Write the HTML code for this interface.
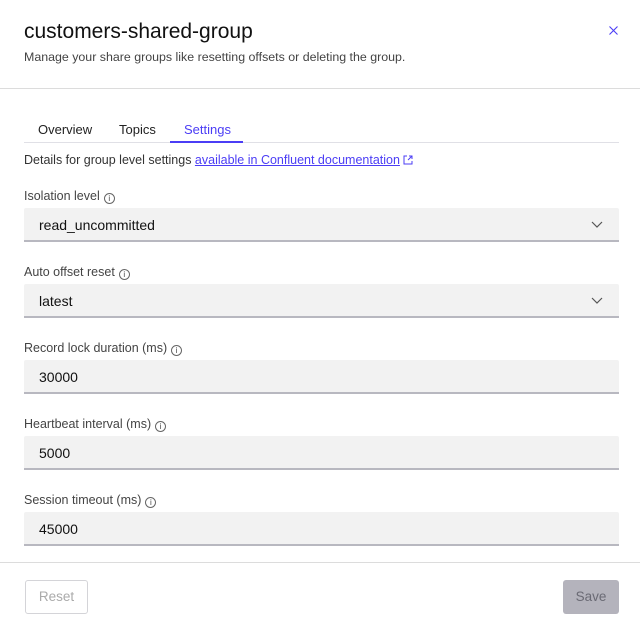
<!DOCTYPE html>
<html><head><style>
*{box-sizing:border-box;margin:0;padding:0}
body{width:640px;height:622px;background:#fff;font-family:"Liberation Sans",sans-serif;color:#1f1f1f;position:relative;overflow:hidden}
.a{position:absolute}
.title{left:24px;top:20px;font-size:21px;color:#111}
.sub{left:24px;top:50px;font-size:12.4px;color:#444}
.close{right:22px;top:26px}
.hr{left:0;width:640px;height:1px;background:#dcdcdc}
.tabline{left:24px;top:142px;width:595px;height:1px;background:#e0e0e6}
.tab{top:122px;font-size:13px;color:#222}
.ul{left:170px;top:141px;width:73px;height:2px;background:#4b3df5}
.det{left:24px;top:153px;font-size:12.5px;color:#333}
.det span{color:#4b3df5;text-decoration:underline}
.lab{left:24px;font-size:12.5px;color:#444}
.i{display:inline-block;width:11px;height:11px;border:1px solid #666;border-radius:50%;font-size:8px;text-align:center;line-height:9px;margin-left:4px;vertical-align:-1px}
.f{left:24px;width:595px;height:34px;background:#f2f2f2;border-bottom:2px solid #b8b8c0;border-radius:2px 2px 0 0;font-size:14px;padding:9px 0 0 15px;color:#111}
.chev{position:absolute;right:16px;top:13px}
.btn{top:580px;height:34px;border-radius:3px;font-size:13.5px;text-align:center;line-height:34px}
</style></head><body>
<div class="a title">customers-shared-group</div>
<div class="a sub">Manage your share groups like resetting offsets or deleting the group.</div>
<svg class="a close" width="9" height="9" viewBox="0 0 9 9"><path d="M0.5 0.5l8 8M8.5 0.5l-8 8" stroke="#4b3df5" stroke-width="1.1"/></svg>
<div class="a hr" style="top:88px"></div>
<div class="a tabline"></div>
<div class="a tab" style="left:38px">Overview</div>
<div class="a tab" style="left:119px">Topics</div>
<div class="a tab" style="left:184px;color:#4b3df5">Settings</div>
<div class="a ul"></div>
<div class="a det">Details for group level settings <span>available in Confluent documentation</span> <svg width="10" height="10" viewBox="0 0 10 10" style="vertical-align:-1px"><path d="M4 1H1v8h8V6M6 1h3v3M9 1 5 5" fill="none" stroke="#4b3df5" stroke-width="1"/></svg></div>

<div class="a lab" style="top:189px">Isolation level<span class="i">i</span></div>
<div class="a f" style="top:208px">read_uncommitted<svg class="chev" width="12" height="8" viewBox="0 0 12 8"><path d="M1 1l5 5 5-5" fill="none" stroke="#555" stroke-width="1.2"/></svg></div>
<div class="a lab" style="top:265px">Auto offset reset<span class="i">i</span></div>
<div class="a f" style="top:284px">latest<svg class="chev" width="12" height="8" viewBox="0 0 12 8"><path d="M1 1l5 5 5-5" fill="none" stroke="#555" stroke-width="1.2"/></svg></div>
<div class="a lab" style="top:341px">Record lock duration (ms)<span class="i">i</span></div>
<div class="a f" style="top:360px">30000</div>
<div class="a lab" style="top:417px">Heartbeat interval (ms)<span class="i">i</span></div>
<div class="a f" style="top:436px">5000</div>
<div class="a lab" style="top:493px">Session timeout (ms)<span class="i">i</span></div>
<div class="a f" style="top:512px">45000</div>

<div class="a hr" style="top:562px"></div>
<div class="a btn" style="left:25px;width:63px;border:1px solid #d4d4d8;color:#aaa;line-height:32px">Reset</div>
<div class="a btn" style="left:563px;width:56px;background:#b4b3bc;color:#6a6a74">Save</div>
</body></html>
